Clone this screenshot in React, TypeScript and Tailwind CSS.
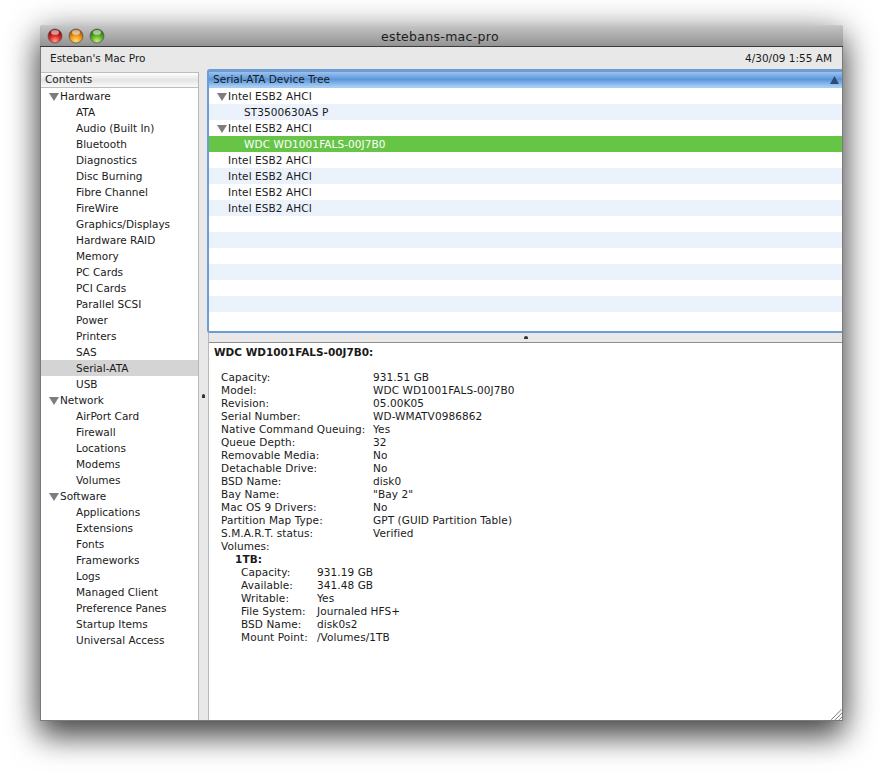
const hardware = ["ATA","Audio (Built In)","Bluetooth","Diagnostics","Disc Burning","Fibre Channel","FireWire","Graphics/Displays","Hardware RAID","Memory","PC Cards","PCI Cards","Parallel SCSI","Power","Printers","SAS","Serial-ATA","USB"];
const network = ["AirPort Card","Firewall","Locations","Modems","Volumes"];
const software = ["Applications","Extensions","Fonts","Frameworks","Logs","Managed Client","Preference Panes","Startup Items","Universal Access"];

const details: [string, string][] = [
  ["Capacity:", "931.51 GB"],
  ["Model:", "WDC WD1001FALS-00J7B0"],
  ["Revision:", "05.00K05"],
  ["Serial Number:", "WD-WMATV0986862"],
  ["Native Command Queuing:", "Yes"],
  ["Queue Depth:", "32"],
  ["Removable Media:", "No"],
  ["Detachable Drive:", "No"],
  ["BSD Name:", "disk0"],
  ["Bay Name:", "\"Bay 2\""],
  ["Mac OS 9 Drivers:", "No"],
  ["Partition Map Type:", "GPT (GUID Partition Table)"],
  ["S.M.A.R.T. status:", "Verified"],
  ["Volumes:", ""],
];
const volume: [string, string][] = [
  ["Capacity:", "931.19 GB"],
  ["Available:", "341.48 GB"],
  ["Writable:", "Yes"],
  ["File System:", "Journaled HFS+"],
  ["BSD Name:", "disk0s2"],
  ["Mount Point:", "/Volumes/1TB"],
];
const tree: { t: string; d: number; arrow?: boolean; sel?: boolean }[] = [
  { t: "Intel ESB2 AHCI", d: 0, arrow: true },
  { t: "ST3500630AS P", d: 1 },
  { t: "Intel ESB2 AHCI", d: 0, arrow: true },
  { t: "WDC WD1001FALS-00J7B0", d: 1, sel: true },
  { t: "Intel ESB2 AHCI", d: 0 },
  { t: "Intel ESB2 AHCI", d: 0 },
  { t: "Intel ESB2 AHCI", d: 0 },
  { t: "Intel ESB2 AHCI", d: 0 },
  { t: "", d: 0 }, { t: "", d: 0 }, { t: "", d: 0 }, { t: "", d: 0 }, { t: "", d: 0 }, { t: "", d: 0 },
];

function Light({ id, c1, c2, c3 }: { id: string; c1: string; c2: string; c3: string }) {
  return (
    <svg width="16" height="16" viewBox="0 0 16 16">
      <defs>
        <radialGradient id={id} cx="50%" cy="85%" r="70%">
          <stop offset="0%" stopColor={c1} />
          <stop offset="55%" stopColor={c2} />
          <stop offset="100%" stopColor={c3} />
        </radialGradient>
      </defs>
      <circle cx="8" cy="8" r="7" fill={`url(#${id})`} stroke="#555" strokeWidth="0.7" />
      <ellipse cx="8" cy="4.4" rx="4" ry="2.4" fill="#fff" opacity="0.55" />
    </svg>
  );
}

function Tri({ className = "" }: { className?: string }) {
  return (
    <svg width="10" height="9" viewBox="0 0 10 9" className={className}>
      <path d="M0 1H10L5 9Z" fill="#7d7d7d" />
    </svg>
  );
}

function Group({ title, items }: { title: string; items: string[] }) {
  return (
    <>
      <div className="h-4 flex items-center pl-[8px]">
        <Tri />
        <span className="ml-[1px]">{title}</span>
      </div>
      {items.map((i) => (
        <div key={i} className={`h-4 flex items-center pl-[35px] ${i === "Serial-ATA" ? "bg-[#d4d4d4]" : ""}`}>{i}</div>
      ))}
    </>
  );
}

export default function App() {
  return (
    <div className="w-[882px] h-[775px] bg-white overflow-hidden pt-[25px] pl-[40px] text-[#1a1a1a] text-[10.5px] leading-[13px] font-['DejaVu_Sans',sans-serif]">
      <div className="w-[803px] h-[696px] flex flex-col rounded-t-[4px] bg-[#e8e8e8] border-x border-b border-[#7a7a7a] shadow-[0_16px_30px_rgba(0,0,0,0.6),0_4px_34px_rgba(0,0,0,0.35)]">
        <div className="h-[22px] shrink-0 -mx-px relative flex items-center justify-center pr-[3px] rounded-t-[4px] border-t border-[#c8c8c8] border-b border-b-[#3c3c3c] bg-gradient-to-b from-[#c4c4c4] to-[#939393] text-[12.5px] tracking-[0.3px] text-[#1c1c1c]">
          <div className="absolute left-[7px] top-[2px] flex gap-[5px]">
            <Light id="r" c1="#ff9c96" c2="#dd2a26" c3="#8c0c0c" />
            <Light id="y" c1="#ffdf70" c2="#f09a20" c3="#a85a08" />
            <Light id="g" c1="#c4f07c" c2="#62b02a" c3="#2e7a10" />
          </div>
          estebans-mac-pro
        </div>
        <div className="h-[23px] shrink-0 flex items-center justify-between pl-[9px] pr-[10px]">
          <span>Esteban's Mac Pro</span>
          <span>4/30/09 1:55 AM</span>
        </div>
        <div className="flex-1 flex min-h-0 pt-[2px]">
          <div className="w-[158px] shrink-0 flex flex-col bg-white border-r border-[#b8b8b8]">
            <div className="h-[16px] shrink-0 flex items-center pl-[4px] pb-[2px] border-t border-b border-[#bdbdbd] bg-gradient-to-b from-[#ffffff] via-[#e4e4e4] to-[#fafafa]">Contents</div>
            <div>
              <Group title="Hardware" items={hardware} />
              <Group title="Network" items={network} />
              <Group title="Software" items={software} />
            </div>
          </div>
          <div className="w-[9px] shrink-0 flex flex-col justify-center items-center">
            <span className="w-[3px] h-[4px] bg-[#333] rounded-t-full" />
          </div>
          <div className="flex-1 min-w-0 flex flex-col -mt-[2px] border-l border-[#b8b8b8]">
            <div className="h-[264px] shrink-0 -mt-px -ml-[2px] flex flex-col bg-white border-2 border-t-[3px] border-r-0 border-[#6d9bd4] rounded-tl-[3px] rounded-bl-[3px]">
              <div className="h-[16px] shrink-0 flex items-center justify-between pl-[4px] pr-[3px] border-b border-[#a9cdf0] bg-gradient-to-b from-[#9cc2ec] via-[#5b97dc] to-[#a8d0f6]">
                <span>Serial-ATA Device Tree</span>
                <svg width="9" height="8" viewBox="0 0 9 8"><path d="M4.5 0L9 8H0Z" fill="#2b4d78" /></svg>
              </div>
              {tree.map((r, i) => (
                <div
                  key={i}
                  className={`h-4 shrink-0 flex items-center tracking-[0.08px] ${r.sel ? "bg-[#66c547] text-white" : i % 2 === 1 ? "bg-[#ebf2fc]" : "bg-white"} ${r.d ? "pl-[35px]" : "pl-[19px]"}`}
                >
                  {r.arrow && <Tri className="-ml-[11px] mr-px" />}
                  {r.t}
                </div>
              ))}
            </div>
            <div className="h-[9px] shrink-0 flex justify-center items-center">
              <span className="w-[4px] h-[3px] bg-[#333] rounded-t-full" />
            </div>
            <div className="flex-1 min-h-0 relative bg-white border-t border-[#8e8e8e] pl-[5px] pt-[3px]">
              <div className="h-[13px] font-bold">WDC WD1001FALS-00J7B0:</div>
              <div className="h-[12px]" />
              <div className="pl-[7px] tracking-[0.08px]">
                {details.map(([k, v]) => (
                  <div key={k} className="h-[13px] flex whitespace-nowrap">
                    <span className="w-[152px] shrink-0">{k}</span>
                    <span>{v}</span>
                  </div>
                ))}
                <div className="h-[13px] pl-[14px] font-bold">1TB:</div>
                {volume.map(([k, v]) => (
                  <div key={k} className="h-[13px] flex pl-[20px] whitespace-nowrap">
                    <span className="w-[76px] shrink-0">{k}</span>
                    <span>{v}</span>
                  </div>
                ))}
              </div>
              <svg width="11" height="11" viewBox="0 0 11 11" className="absolute right-0 bottom-0">
                <path d="M0 11L11 0M4 11L11 4M8 11L11 8" stroke="#777" strokeWidth="1.1" strokeDasharray="1 0.5" fill="none" />
              </svg>
            </div>
          </div>
        </div>
      </div>
    </div>
  );
}
